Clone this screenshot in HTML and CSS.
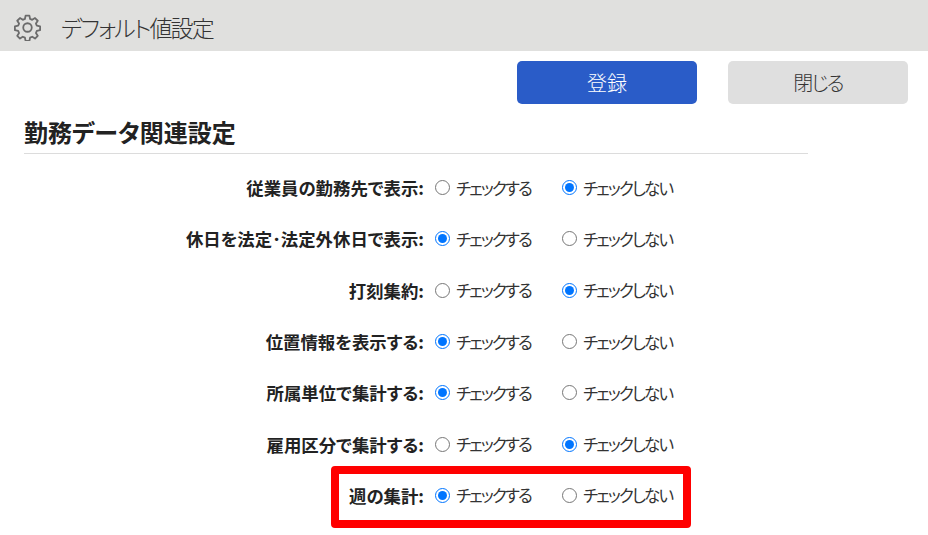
FILE: index.html
```html
<!DOCTYPE html>
<html lang="ja">
<head>
  <meta charset="UTF-8" />
  <title>デフォルト値設定</title>
  <link rel="stylesheet" href="styles.css">
</head>
<body>
  <div class="title-bar">
    <svg class="gear" viewBox="0 0 24 24" width="27" height="27" fill="none" stroke="#6b6b6b" stroke-width="1.6" stroke-linejoin="round">
      <circle cx="12" cy="12" r="3.8"/>
      <path d="M10.3 1.5h3.4l.6 2.9 1.9.8 2.5-1.6 2.4 2.4-1.6 2.5.8 1.9 2.9.6v3.4l-2.9.6-.8 1.9 1.6 2.5-2.4 2.4-2.5-1.6-1.9.8-.6 2.9h-3.4l-.6-2.9-1.9-.8-2.5 1.6-2.4-2.4 1.6-2.5-.8-1.9-2.9-.6v-3.4l2.9-.6.8-1.9-1.6-2.5 2.4-2.4 2.5 1.6 1.9-.8z"/>
    </svg>
    <span class="title-text">デフォルト値設定</span>
  </div>

  <div class="actions">
    <button class="btn btn-primary">登録</button>
    <button class="btn btn-close">閉じる</button>
  </div>

  <h2 class="section-title">勤務データ関連設定</h2>

  <div class="settings">
    <div class="row">
      <label class="row-label">従業員の勤務先で表示:</label>
      <label class="opt"><input type="radio" name="r1">チェックする</label>
      <label class="opt"><input type="radio" name="r1" checked>チェックしない</label>
    </div>
    <div class="row">
      <label class="row-label">休日を法定･法定外休日で表示:</label>
      <label class="opt"><input type="radio" name="r2" checked>チェックする</label>
      <label class="opt"><input type="radio" name="r2">チェックしない</label>
    </div>
    <div class="row">
      <label class="row-label">打刻集約:</label>
      <label class="opt"><input type="radio" name="r3">チェックする</label>
      <label class="opt"><input type="radio" name="r3" checked>チェックしない</label>
    </div>
    <div class="row">
      <label class="row-label">位置情報を表示する:</label>
      <label class="opt"><input type="radio" name="r4" checked>チェックする</label>
      <label class="opt"><input type="radio" name="r4">チェックしない</label>
    </div>
    <div class="row">
      <label class="row-label">所属単位で集計する:</label>
      <label class="opt"><input type="radio" name="r5" checked>チェックする</label>
      <label class="opt"><input type="radio" name="r5">チェックしない</label>
    </div>
    <div class="row">
      <label class="row-label">雇用区分で集計する:</label>
      <label class="opt"><input type="radio" name="r6">チェックする</label>
      <label class="opt"><input type="radio" name="r6" checked>チェックしない</label>
    </div>
    <div class="row">
      <label class="row-label">週の集計:</label>
      <label class="opt"><input type="radio" name="r7" checked>チェックする</label>
      <label class="opt"><input type="radio" name="r7">チェックしない</label>
    </div>
  </div>

  <div class="highlight"></div>
</body>
</html>
```

FILE: styles.css
```css
body {
  margin: 0;
  height: 535px;
  overflow: hidden;
  position: relative;
  background: #fff;
  color: #333;
  font-family: "Noto Sans CJK JP", sans-serif;
  font-feature-settings: "palt";
  font-size: 16px;
}

.title-bar {
  display: flex;
  align-items: center;
  height: 51px;
  padding-left: 14px;
  padding-top: 3px;
  box-sizing: border-box;
  background: #e0e0de;
}

.gear {
  flex: none;
}

.title-text {
  margin-left: 20px;
  font-size: 23px;
  font-weight: 300;
  letter-spacing: -1.9px;
}

.actions {
  display: flex;
  justify-content: flex-end;
  gap: 31px;
  padding: 10px 20px 0 0;
}

.btn {
  width: 180px;
  height: 43px;
  border: none;
  border-radius: 5px;
  font-family: inherit;
  font-feature-settings: inherit;
  font-size: 20px;
  font-weight: 300;
}

.btn-primary {
  background: #2a5cc8;
  color: #fff;
}

.btn-close {
  background: #dfdfdf;
  color: #333;
  letter-spacing: -2px;
}

.section-title {
  width: 784px;
  height: 50px;
  margin: 0 0 0 24px;
  box-sizing: border-box;
  padding-top: 12px;
  border-bottom: 1px solid #dcdcdc;
  color: #222;
  font-size: 24px;
  line-height: 32px;
  font-weight: 700;
}

.settings {
  padding-top: 8px;
}

.row {
  display: flex;
  align-items: center;
  height: 51.3px;
}

.row-label {
  width: 424px;
  text-align: right;
  font-size: 17.4px;
  font-weight: 700;
  color: #222;
}

.opt {
  display: flex;
  align-items: center;
  margin-left: 11px;
  width: 116px;
  white-space: nowrap;
  font-size: 16.5px;
  letter-spacing: -1.85px;
}

.opt input {
  width: 15px;
  height: 15px;
  margin: 0 6px 0 0;
}

.highlight {
  position: absolute;
  left: 331px;
  top: 466px;
  width: 344px;
  height: 46px;
  border: 8px solid #f00;
  border-radius: 4px;
}
```
